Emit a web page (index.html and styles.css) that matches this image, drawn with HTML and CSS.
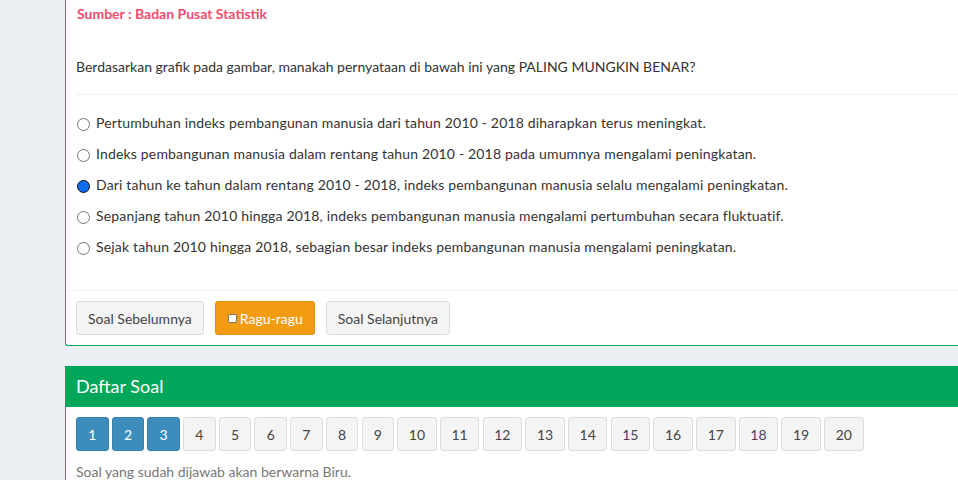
FILE: index.html
```html
<!DOCTYPE html>
<html lang="id">
<head>
<meta charset="utf-8">
<title>Soal</title>
<link rel="stylesheet" href="styles.css">
</head>
<body>
<div class="content">
  <div class="box box-question">
    <div class="box-body">
      <p class="source">Sumber : Badan Pusat Statistik</p>
      <p class="question">Berdasarkan grafik pada gambar, manakah pernyataan di bawah ini yang PALING MUNGKIN BENAR?</p>
      <hr class="divider">
      <ul class="options">
        <li><label><input type="radio" name="jawab"> Pertumbuhan indeks pembangunan manusia dari tahun 2010 - 2018 diharapkan terus meningkat.</label></li>
        <li><label><input type="radio" name="jawab"> Indeks pembangunan manusia dalam rentang tahun 2010 - 2018 pada umumnya mengalami peningkatan.</label></li>
        <li><label><input type="radio" name="jawab" checked> Dari tahun ke tahun dalam rentang 2010 - 2018, indeks pembangunan manusia selalu mengalami peningkatan.</label></li>
        <li><label><input type="radio" name="jawab"> Sepanjang tahun 2010 hingga 2018, indeks pembangunan manusia mengalami pertumbuhan secara fluktuatif.</label></li>
        <li><label><input type="radio" name="jawab"> Sejak tahun 2010 hingga 2018, sebagian besar indeks pembangunan manusia mengalami peningkatan.</label></li>
      </ul>
    </div>
    <div class="box-footer">
      <button class="btn btn-default">Soal Sebelumnya</button>
      <button class="btn btn-warning"><span class="check"></span>Ragu-ragu</button>
      <button class="btn btn-default">Soal Selanjutnya</button>
    </div>
  </div>

  <div class="box box-list">
    <div class="box-header"><h3>Daftar Soal</h3></div>
    <div class="box-body list-body">
      <div class="numbers">
        <button class="num done">1</button>
        <button class="num done">2</button>
        <button class="num done">3</button>
        <button class="num">4</button>
        <button class="num">5</button>
        <button class="num">6</button>
        <button class="num">7</button>
        <button class="num">8</button>
        <button class="num">9</button>
        <button class="num two">10</button>
        <button class="num two">11</button>
        <button class="num two">12</button>
        <button class="num two">13</button>
        <button class="num two">14</button>
        <button class="num two">15</button>
        <button class="num two">16</button>
        <button class="num two">17</button>
        <button class="num two">18</button>
        <button class="num two">19</button>
        <button class="num two">20</button>
      </div>
      <p class="note">Soal yang sudah dijawab akan berwarna Biru.</p>
    </div>
  </div>
</div>
</body>
</html>
```
FILE: styles.css
```css
* { box-sizing: border-box; }
html, body {
  margin: 0;
  padding: 0;
  background: #ecf0f5;
  font-family: "Lato", "Open Sans", sans-serif;
  font-size: 14px;
  color: #333;
  overflow: hidden;
}
.content {
  padding-left: 65px;
  width: 1000px;
}
.box {
  background: #fff;
  border: 1px solid #00a65a;
  border-top: none;
  border-right: none;
}
.box-question { border-radius: 0 0 0 3px; }
.box-body {
  padding: 5px 0 0 10px;
}
.source {
  margin: 0;
  font-size: 14px;
  font-weight: bold;
  color: #f04c6e;
  line-height: 18px;
  padding-left: 1px;
}
.question {
  margin: 34px 0 0;
  line-height: 20px;
}
.divider {
  border: 0;
  border-top: 1px solid #eee;
  margin: 17px 0 0;
}
.options {
  list-style: none;
  margin: 18px 0 0;
  padding: 0 0 22px;
  letter-spacing: 0.17px;
}
.options li {
  height: 31px;
  line-height: 20px;
}
.options label {
  display: flex;
  align-items: center;
}
.options input {
  appearance: none;
  -webkit-appearance: none;
  width: 13px;
  height: 13px;
  margin: 3px 6px 0 1px;
  border: 1px solid #767676;
  border-radius: 50%;
  background: #fff;
  flex: none;
}
.options input:checked {
  background: #0b6cf0;
  border: 1.5px solid #111;
}
.box-footer {
  border-top: 1px solid #f4f4f4;
  padding: 10px 10px;
  display: flex;
  gap: 11px;
}
.btn {
  font-family: inherit;
  font-size: 14px;
  height: 34px;
  padding: 0 11px;
  border-radius: 3px;
  border: 1px solid #ddd;
  background: #f4f4f4;
  color: #444;
  display: inline-flex;
  align-items: center;
}
.btn-warning {
  background: #f39c12;
  border-color: #e08e0b;
  color: #fff;
  padding: 0 11px 0 12px;
}
.check {
  width: 9px;
  height: 9px;
  background: #fff;
  border: 1px solid #777;
  border-radius: 2px;
  margin-right: 3px;
}
.box-list {
  margin-top: 20px;
  border-bottom: none;
}
.box-header {
  background: #00a65a;
  color: #fff;
  padding: 10px 10px;
  height: 41px;
}
.box-header h3 {
  margin: 0;
  font-size: 18px;
  font-weight: normal;
  line-height: 21px;
}
.list-body {
  padding: 10px 10px 10px 10px;
}
.numbers {
  display: flex;
  gap: 3.2px;
}
.num {
  width: 32.5px;
  height: 34px;
  padding: 0;
  font-family: inherit;
  font-size: 14px;
  color: #444;
  background: #f4f4f4;
  border: 1px solid #ddd;
  border-radius: 3px;
}
.num.two { width: 39.5px; }
.num.done {
  background: #3c8dbc;
  border-color: #367fa9;
  color: #fff;
}
.note {
  margin: 12px 0 0;
  color: #777;
  font-size: 14px;
}
```
